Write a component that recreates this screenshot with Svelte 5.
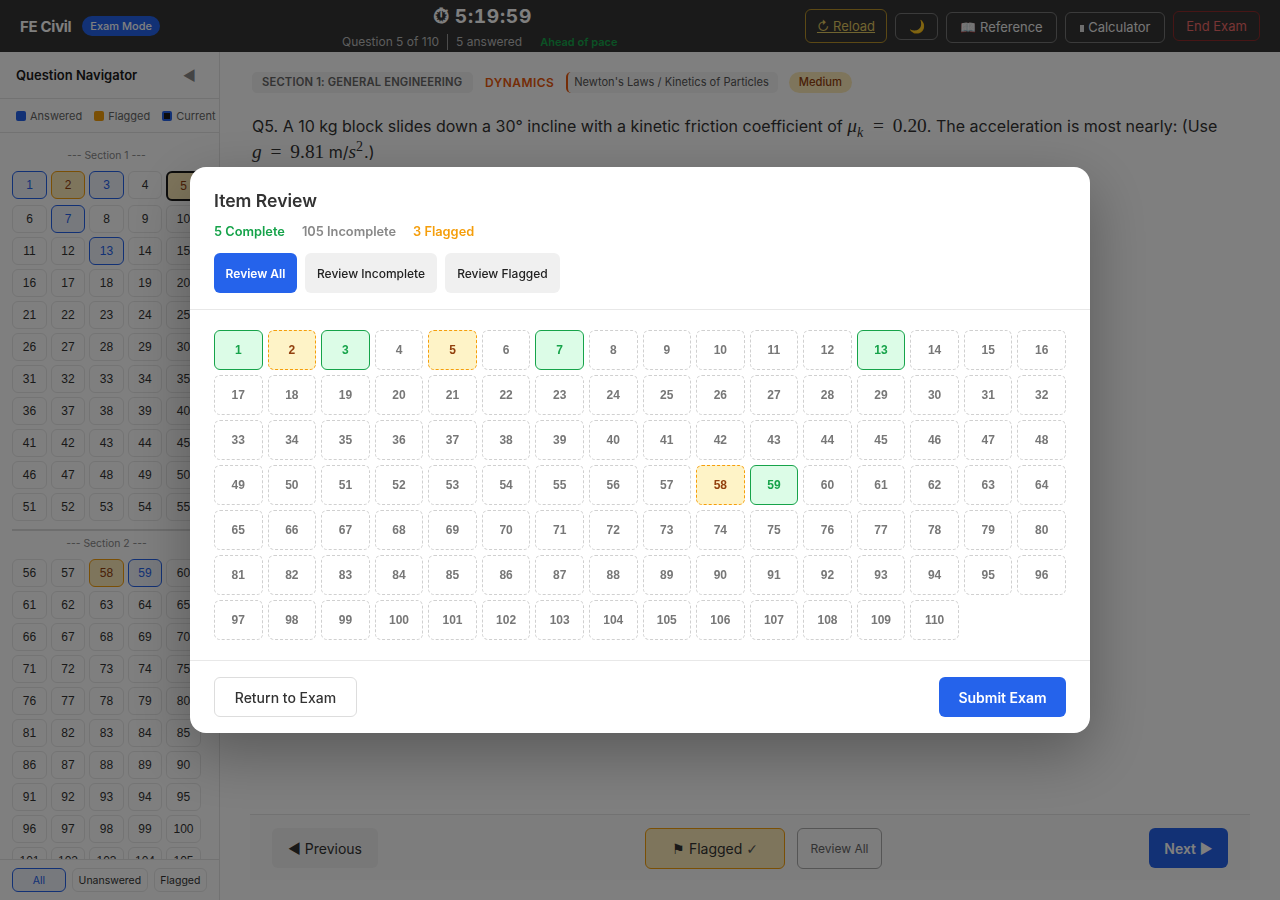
<script>
  const range = (a, b) => Array.from({ length: b - a + 1 }, (_, i) => a + i);
  const answered = [1, 3, 7, 13, 59];
  const flagged = [2, 5, 58];
  const cellClass = (n) =>
    n === 5 ? 'flag current' : flagged.includes(n) ? 'flag' : answered.includes(n) ? 'ans' : '';
  const reviewClass = (n) =>
    flagged.includes(n) ? 'flag' : answered.includes(n) ? 'done' : '';
  const sections = [
    { label: '--- Section 1 ---', items: range(1, 55) },
    { label: '--- Section 2 ---', items: range(56, 110) }
  ];
</script>

<div class="page">
  <header class="top">
    <div class="brand">
      <span class="name">FE Civil</span>
      <span class="mode">Exam Mode</span>
    </div>
    <div class="center">
      <div class="timer"><span class="clock">⏱</span> 5:19:59</div>
      <div class="progress">
        <span>Question 5 of 110</span>
        <span class="sep">5 answered</span>
        <span class="pace">Ahead of pace</span>
      </div>
    </div>
    <div class="actions">
      <button class="tb reload">↻ Reload</button>
      <button class="tb moon">🌙</button>
      <button class="tb ref">📖 Reference</button>
      <button class="tb calc"><span class="calc-ic"></span> Calculator</button>
      <button class="tb end">End Exam</button>
    </div>
  </header>

  <div class="body">
    <aside class="side">
      <div class="side-head">
        <span>Question Navigator</span>
        <span class="collapse">◀</span>
      </div>
      <div class="legend">
        <span class="lg"><i class="sw s-a"></i>Answered</span>
        <span class="lg"><i class="sw s-f"></i>Flagged</span>
        <span class="lg"><i class="sw s-c"></i>Current</span>
      </div>
      <div class="list">
        {#each sections as s, i}
          <section class="sec" class:second={i > 0}>
            <div class="sec-label">{s.label}</div>
            <div class="cells">
              {#each s.items as n}
                <button class="cell {cellClass(n)}">{n}</button>
              {/each}
            </div>
          </section>
        {/each}
      </div>
      <div class="side-foot">
        <button class="fb on">All</button>
        <button class="fb">Unanswered</button>
        <button class="fb">Flagged</button>
      </div>
    </aside>

    <main class="main">
      <div class="tags">
        <span class="tag-sec">SECTION 1: GENERAL ENGINEERING</span>
        <span class="tag-sub">DYNAMICS</span>
        <span class="tag-topic">Newton's Laws / Kinetics of Particles</span>
        <span class="tag-diff">Medium</span>
      </div>
      <p class="q">
        Q5. A 10 kg block slides down a 30° incline with a kinetic friction coefficient of
        <span class="m"><i>μ<sub>k</sub></i> = 0.20</span>. The acceleration is most nearly: (Use
        <span class="m"><i>g</i> = 9.81</span> m/<span class="m"><i>s</i><sup>2</sup></span>.)
      </p>
      <div class="grow"></div>
      <nav class="nav">
        <button class="prev">◀ Previous</button>
        <div class="nav-mid">
          <button class="flagbtn">⚑ Flagged <span class="tick">✓</span></button>
          <button class="revall">Review All</button>
        </div>
        <button class="next">Next ▶</button>
      </nav>
    </main>
  </div>

  <div class="overlay">
    <div class="modal">
      <div class="m-head">
        <h2>Item Review</h2>
        <div class="stats">
          <span class="st-c">5 Complete</span>
          <span class="st-i">105 Incomplete</span>
          <span class="st-f">3 Flagged</span>
        </div>
        <div class="filters">
          <button class="filter active">Review All</button>
          <button class="filter">Review Incomplete</button>
          <button class="filter">Review Flagged</button>
        </div>
      </div>
      <div class="m-grid">
        {#each range(1, 110) as n}
          <button class="item {reviewClass(n)}">{n}</button>
        {/each}
      </div>
      <div class="m-foot">
        <button class="ret">Return to Exam</button>
        <button class="submit">Submit Exam</button>
      </div>
    </div>
  </div>
</div>

<style>
  :global(body) {
    margin: 0;
    font-family: Inter, "Liberation Sans", sans-serif;
    color: #1a1a1a;
  }
  button {
    font-family: inherit;
    cursor: pointer;
    padding: 0;
  }
  .page {
    width: 1280px;
    height: 900px;
    overflow: hidden;
    display: flex;
    flex-direction: column;
    background: #fff;
  }
  .top {
    height: 52px;
    flex: none;
    background: #343434;
    display: grid;
    grid-template-columns: 1fr auto 1fr;
    align-items: center;
    padding: 0 20px;
    color: #fff;
    position: relative;
  }
  .brand {
    display: flex;
    align-items: center;
    gap: 11px;
  }
  .name {
    font-size: 15px;
    font-weight: 700;
    letter-spacing: -0.3px;
  }
  .mode {
    background: #2563eb;
    border-radius: 12px;
    font-size: 11px;
    font-weight: 500;
    padding: 3px 8px;
    line-height: 14px;
  }
  .center {
    position: absolute;
    left: 340px;
    width: 285px;
    top: 0;
    text-align: center;
  }
  .timer {
    font-weight: 700;
    font-size: 19.2px;
    font-variant-numeric: tabular-nums;
    letter-spacing: 0.7px;
    line-height: 24px;
    margin-top: 4px;
    color: #fff;
  }
  .clock {
    font-family: "DejaVu Sans", sans-serif;
    font-size: 21px;
    letter-spacing: 0;
  }
  .progress {
    font-size: 12px;
    line-height: 16px;
    margin-top: 6px;
    color: #bbb;
    display: flex;
    justify-content: flex-start;
    padding-left: 2px;
  }
  .sep {
    border-left: 1px solid #999;
    margin-left: 8px;
    padding-left: 8px;
  }
  .pace {
    margin-left: 18px;
    color: #16a34a;
    font-weight: 600;
    font-size: 11px;
  }
  .actions {
    grid-column: 3;
    display: flex;
    align-items: center;
    justify-content: flex-end;
    gap: 8px;
  }
  .tb {
    background: transparent;
    border-radius: 6px;
    border: 1px solid #777;
    color: #eee;
    font-size: 13px;
    white-space: nowrap;
  }
  .reload {
    width: 82px;
    height: 34px;
    border-color: #b8922a;
    color: #e0c860;
    text-decoration: underline;
    font-size: 13px;
  }
  .moon {
    width: 43px;
    height: 27px;
  }
  .ref {
    width: 111px;
    height: 31px;
    position: relative;
    top: 1px;
  }
  .calc {
    width: 100px;
    height: 31px;
    position: relative;
    top: 1px;
  }
  .calc-ic {
    display: inline-block;
    width: 4px;
    height: 7px;
    background: #ddd;
    margin-right: 1px;
  }
  .end {
    width: 87px;
    height: 30px;
    border-color: #8f2c2c;
    color: #ee6a6a;
  }
  .body {
    flex: 1;
    display: flex;
    min-height: 0;
  }
  .side {
    width: 220px;
    flex: none;
    box-sizing: border-box;
    border-right: 1px solid #e5e5e5;
    background: #fff;
    display: flex;
    flex-direction: column;
  }
  .side-head {
    height: 47px;
    flex: none;
    box-sizing: border-box;
    border-bottom: 1px solid #e5e5e5;
    display: flex;
    align-items: center;
    justify-content: space-between;
    padding: 0 23px 0 16px;
    font-size: 13px;
    font-weight: 600;
  }
  .collapse {
    font-size: 14px;
    color: #888;
  }
  .legend {
    height: 34px;
    flex: none;
    box-sizing: border-box;
    border-bottom: 1px solid #e5e5e5;
    display: flex;
    align-items: center;
    gap: 12px;
    padding-left: 16px;
    font-size: 11px;
    color: #666;
    white-space: nowrap;
  }
  .lg {
    display: flex;
    align-items: center;
    gap: 4px;
  }
  .sw {
    width: 10px;
    height: 10px;
    border-radius: 2px;
    box-sizing: border-box;
  }
  .s-a {
    background: #2563eb;
  }
  .s-f {
    background: #f59e0b;
  }
  .s-c {
    background: #1a1a1a;
    border: 2px solid #2563eb;
  }
  .list {
    flex: 1;
    min-height: 0;
    overflow-y: scroll;
    padding: 14px 0 10px 12px;
  }
  .list::-webkit-scrollbar {
    width: 6px;
  }
  .list::-webkit-scrollbar-thumb {
    background: #c4c4c4;
    border-radius: 3px;
  }
  .list::-webkit-scrollbar-track {
    background: transparent;
  }
  .sec.second {
    margin-top: 8px;
    border-top: 2px solid #ddd;
    padding-top: 4px;
  }
  .sec-label {
    height: 16px;
    line-height: 18px;
    margin-bottom: 8px;
    width: 189px;
    text-align: center;
    font-size: 10.4px;
    color: #888;
  }
  .cells {
    display: grid;
    grid-template-columns: 35px 34px 35px 34px 35px;
    gap: 4px;
  }
  .cell {
    height: 28px;
    box-sizing: border-box;
    border: 1px solid #e8e8e8;
    background: #fff;
    border-radius: 6px;
    font-family: "Liberation Sans", sans-serif;
    font-size: 12px;
    color: #333;
  }
  .cell.ans {
    border-color: #2563eb;
    background: #eff2fb;
    color: #2563eb;
  }
  .cell.flag {
    border-color: #f59e0b;
    background: #fdebb9;
    color: #92400e;
  }
  .cell.current {
    height: 30px;
    border: 2px solid #1a1a1a;
  }
  .side-foot {
    height: 41px;
    flex: none;
    box-sizing: border-box;
    border-top: 1px solid #e5e5e5;
    display: flex;
    gap: 6px;
    padding: 8px 12px 0;
  }
  .fb {
    height: 24px;
    flex: 1 1 auto;
    border: 1px solid #e8e8e8;
    background: #fff;
    border-radius: 6px;
    font-size: 10.5px;
    color: #333;
    white-space: nowrap;
    padding: 0 5px;
  }
  .fb.on {
    flex: none;
    width: 54px;
    border-color: #2563eb;
    color: #2563eb;
    background: #eff2fb;
  }
  .main {
    flex: 1;
    min-width: 0;
    display: flex;
    flex-direction: column;
    padding: 20px 32px 20px 30px;
    box-sizing: border-box;
  }
  .tags {
    margin-left: 2px;
    display: flex;
    align-items: center;
    height: 21px;
    font-size: 11.2px;
  }
  .tag-sec {
    background: #f2f2f2;
    border-radius: 5px;
    padding: 0 10px;
    line-height: 21px;
    width: 221px;
    box-sizing: border-box;
    font-weight: 600;
    color: #666;
    letter-spacing: 0.18px;
    white-space: nowrap;
  }
  .tag-sub {
    margin-left: 12px;
    font-size: 12px;
    font-weight: 600;
    color: #ea580c;
    letter-spacing: 0.45px;
  }
  .tag-topic {
    margin-left: 12px;
    background: #f5f5f5;
    border-left: 2px solid #ea580c;
    border-radius: 5px;
    padding: 0 9px 0 6px;
    line-height: 21px;
    color: #555;
    font-size: 11.1px;
    white-space: nowrap;
  }
  .tag-diff {
    margin-left: 11px;
    background: #fdebb9;
    color: #92400e;
    border-radius: 11px;
    padding: 0 10px;
    line-height: 21px;
    font-weight: 500;
  }
  .q {
    margin: 20px 0 0 2px;
    font-size: 16px;
    line-height: 26px;
    color: #333;
    width: 975px;
  }
  .m {
    font-family: "Liberation Serif", serif;
    font-size: 19.4px;
    word-spacing: 4px;
    white-space: nowrap;
  }
  .m sub,
  .m sup {
    font-size: 14px;
    line-height: 0;
    margin-right: 1px;
  }
  .grow {
    flex: 1;
  }
  .nav {
    height: 66px;
    flex: none;
    box-sizing: border-box;
    background: #fafafa;
    border-top: 1px solid #e5e5e5;
    display: flex;
    align-items: flex-start;
    justify-content: space-between;
    padding: 13px 22px 0;
    width: 1000px;
  }
  .prev {
    width: 106px;
    height: 40px;
    border: none;
    border-radius: 6px;
    background: #f0f0f0;
    font-size: 14px;
    color: #333;
  }
  .nav-mid {
    display: flex;
    gap: 12px;
  }
  .flagbtn {
    width: 140px;
    height: 41px;
    border: 1px solid #f59e0b;
    border-radius: 6px;
    background: #fdebb9;
    font-size: 14px;
    color: #333;
  }
  .tick {
    font-family: "DejaVu Sans", sans-serif;
    font-weight: 400;
    color: #555;
  }
  .revall {
    width: 85px;
    height: 41px;
    border: 1px solid #aaa;
    border-radius: 6px;
    background: transparent;
    font-size: 12px;
    color: #666;
  }
  .next {
    width: 79px;
    height: 40px;
    border: none;
    border-radius: 6px;
    background: #2563eb;
    color: #fff;
    font-size: 14px;
    font-weight: 600;
  }
  .overlay {
    position: fixed;
    inset: 0;
    background: rgba(0, 0, 0, 0.5);
    backdrop-filter: blur(0.6px);
    display: flex;
    align-items: center;
    justify-content: center;
  }
  .modal {
    width: 900px;
    background: #fff;
    border-radius: 16px;
    box-shadow: 0 20px 60px rgba(0, 0, 0, 0.3);
  }
  .m-head {
    padding: 24px 24px 16px;
    border-bottom: 1px solid #e8e8e8;
  }
  h2 {
    margin: 0;
    font-size: 17.6px;
    line-height: 20px;
    font-weight: 600;
    color: #333;
  }
  .stats {
    margin-top: 13px;
    display: flex;
    gap: 17px;
    font-size: 12.8px;
    line-height: 16px;
    font-weight: 600;
  }
  .st-c {
    color: #16a34a;
  }
  .st-i {
    color: #888;
  }
  .st-f {
    color: #f59e0b;
  }
  .filters {
    margin-top: 13px;
    display: flex;
    gap: 8px;
  }
  .filter {
    height: 40px;
    padding: 0 12px;
    border: none;
    border-radius: 6px;
    background: #f0f0f0;
    color: #222;
    font-size: 12px;
    font-weight: 500;
  }
  .filter.active {
    background: #2563eb;
    color: #fff;
    font-weight: 600;
    padding: 0 11.6px;
  }
  .m-grid {
    padding: 20px 24px;
    display: grid;
    grid-template-columns: repeat(16, 1fr);
    gap: 5px;
    border-bottom: 1px solid #e8e8e8;
  }
  .item {
    height: 40px;
    box-sizing: border-box;
    border: 1px dashed #d0d0d0;
    border-radius: 6px;
    background: #fff;
    color: #777;
    font-family: "Liberation Sans", sans-serif;
    font-size: 12px;
    font-weight: 700;
  }
  .item.done {
    background: #dcfce7;
    border: 1px solid #16a34a;
    color: #16a34a;
  }
  .item.flag {
    background: #fef3c7;
    border: 1px dashed #f59e0b;
    color: #92400e;
  }
  .m-foot {
    padding: 16px 24px;
    display: flex;
    justify-content: space-between;
  }
  .ret {
    width: 143px;
    height: 40px;
    border: 1px solid #ddd;
    border-radius: 6px;
    background: #fff;
    color: #333;
    font-size: 14px;
    font-weight: 500;
  }
  .submit {
    width: 127px;
    height: 40px;
    border: none;
    border-radius: 6px;
    background: #2563eb;
    color: #fff;
    font-size: 14px;
    font-weight: 600;
  }
</style>
